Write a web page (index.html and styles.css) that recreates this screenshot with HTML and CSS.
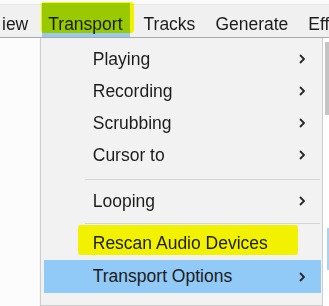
FILE: index.html
```html
<!DOCTYPE html>
<html lang="en">
  <head>
    <meta charset="UTF-8" />
    <meta name="viewport" content="width=device-width, initial-scale=1.0" />
    <title>Transport menu</title>
    <link rel="stylesheet" href="styles.css">
  </head>
  <body>
    <div class="menubar">
      <span class="menubar-item">iew</span>
      <span class="menubar-item open">Transport<span class="marker"></span></span>
      <span class="menubar-item">Tracks</span>
      <span class="menubar-item">Generate</span>
      <span class="menubar-item">Eff</span>
    </div>

    <div class="workspace">
      <div class="gutter"></div>
      <div class="dropdown">
        <div class="menu-row">
          <span>Playing</span>
          <svg class="arrow" width="6" height="10" viewBox="0 0 6 10"><path d="M1 1 L5 5 L1 9" /></svg>
        </div>
        <div class="menu-row">
          <span>Recording</span>
          <svg class="arrow" width="6" height="10" viewBox="0 0 6 10"><path d="M1 1 L5 5 L1 9" /></svg>
        </div>
        <div class="menu-row">
          <span>Scrubbing</span>
          <svg class="arrow" width="6" height="10" viewBox="0 0 6 10"><path d="M1 1 L5 5 L1 9" /></svg>
        </div>
        <div class="menu-row">
          <span>Cursor to</span>
          <svg class="arrow" width="6" height="10" viewBox="0 0 6 10"><path d="M1 1 L5 5 L1 9" /></svg>
        </div>
        <div class="sep"></div>
        <div class="menu-row">
          <span>Looping</span>
          <svg class="arrow" width="6" height="10" viewBox="0 0 6 10"><path d="M1 1 L5 5 L1 9" /></svg>
        </div>
        <div class="sep sep-low"></div>
        <div class="menu-row">
          <span>Rescan Audio Devices</span>
          <span class="marker"></span>
        </div>
        <div class="menu-row hover">
          <span>Transport Options</span>
          <svg class="arrow" width="6" height="10" viewBox="0 0 6 10"><path d="M1 1 L5 5 L1 9" /></svg>
        </div>
      </div>
      <div class="side">
        <div class="thumb"></div>
        <div class="side-sel"></div>
      </div>
    </div>
  </body>
</html>
```

FILE: styles.css
```css
body {
  margin: 0;
  width: 329px;
  height: 306px;
  overflow: hidden;
  background: #fcfcfc;
  font-family: "Liberation Sans", Arial, sans-serif;
  font-size: 17.5px;
  color: #1c1c1c;
}
.menubar {
  display: flex;
  gap: 8px;
  height: 34px;
  padding-top: 3px;
  background: linear-gradient(#fbfbfb 0 4px, #e6e6e6 4px 5px, #f0f0f0 5px);
  border-bottom: 1px solid #a8a8a8;
  white-space: nowrap;
}
.menubar-item {
  position: relative;
  height: 25px;
  line-height: 25px;
  padding: 9px 6px 0;
}
.menubar-item:first-child {
  margin-left: -4px;
}
.menubar-item.open {
  padding: 9px 7px 0 6px;
  background: #99c9ef;
}
.marker {
  position: absolute;
  background: #ffff00;
  mix-blend-mode: multiply;
  border-radius: 3px;
}
.menubar .marker {
  left: -1px;
  top: -1px;
  right: -4px;
  bottom: 4px;
}
.workspace {
  display: flex;
}
.gutter {
  width: 40px;
}
.dropdown {
  width: 279px;
  padding: 5px 1px 9px 3px;
  background: #f2f2f2;
  border: 1px solid #cdcdcd;
  border-top: none;
  box-shadow: 1px 2px 2px rgba(0, 0, 0, 0.25);
}
.menu-row {
  position: relative;
  display: flex;
  align-items: center;
  justify-content: space-between;
  height: 32px;
  padding: 0 16px 0 49px;
}
.menu-row .marker {
  left: 34px;
  right: 23px;
  top: -2px;
  bottom: 4px;
}
.menu-row.hover {
  height: 33px;
  margin-top: 1px;
  background: #91c9f7;
}
.arrow path {
  fill: none;
  stroke: #262626;
  stroke-width: 1.8;
}
.sep {
  height: 1px;
  margin: 8px 1px 5px 41px;
  background: #d5d5d5;
}
.sep.sep-low {
  margin: 6px 1px 3px 41px;
}
.side {
  width: 6px;
  height: 268px;
  padding-left: 2px;
  box-sizing: border-box;
  background: #fff;
}
.thumb {
  width: 4px;
  height: 73px;
  margin-top: 4px;
  background: #c4c4c4;
}
.side-sel {
  width: 2px;
  height: 42px;
  margin: 113px 0 0 2px;
  background: #a9d1f5;
}
```
